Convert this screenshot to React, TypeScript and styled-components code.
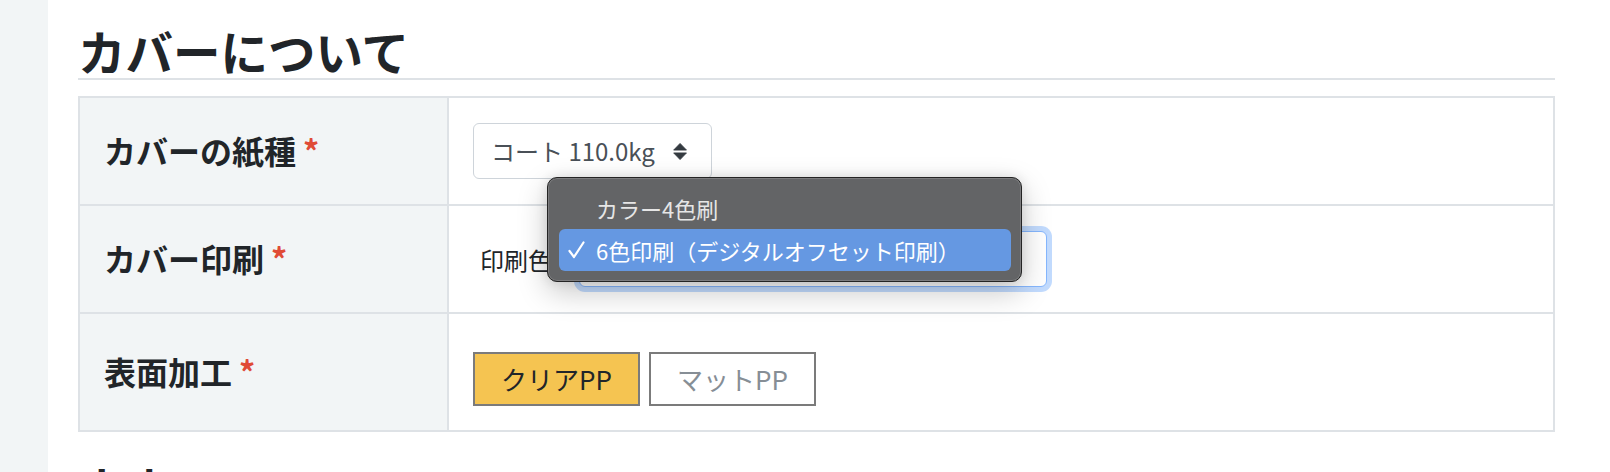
import React from "react";
import styled, { createGlobalStyle } from "styled-components";

const GlobalStyle = createGlobalStyle`
  html, body { margin: 0; padding: 0; background: #ffffff; }
  body {
    font-family: "Noto Sans CJK JP", "Noto Sans", sans-serif;
    color: #212529;
  }
  * { box-sizing: border-box; }
`;

const Page = styled.div`
  display: flex;
  height: 472px;
  overflow: hidden;
`;

const Sidebar = styled.aside`
  width: 48px;
  flex-shrink: 0;
  background: #f2f5f6;
`;

const Main = styled.main`
  flex: 1;
  min-width: 0;
  padding: 23px 55px 0 30px;
`;

const SectionTitle = styled.h2`
  margin: 0;
  font-size: 47.5px;
  line-height: 55px;
  font-weight: 700;
  color: #212529;
  border-bottom: 2px solid #dee2e6;
`;

const NextTitle = styled(SectionTitle)`
  margin-top: 30px;
  border-bottom: none;
`;

const SpecTable = styled.table`
  width: 100%;
  margin-top: 16px;
  border-collapse: collapse;
  table-layout: fixed;
  border: 2px solid #dee2e6;
`;

const LabelCell = styled.th<{ $h: number }>`
  width: 369px;
  height: ${(p) => p.$h}px;
  padding: 0 24px;
  background: #f2f5f6;
  border: 2px solid #dee2e6;
  text-align: left;
  vertical-align: middle;
  font-size: 32px;
  line-height: 1.3;
  font-weight: 700;
  color: #212529;
`;

const Required = styled.span`
  color: #e04b36;
  margin-left: 7px;
`;

const ValueCell = styled.td<{ $offset?: number }>`
  border: 2px solid #dee2e6;
  padding: ${(p) => p.$offset ?? 0}px 24px 0 24px;
  vertical-align: middle;
  background: #ffffff;
`;

const SelectBox = styled.div<{ $width: number; $focused?: boolean }>`
  display: inline-flex;
  align-items: center;
  justify-content: space-between;
  gap: 18px;
  width: ${(p) => p.$width}px;
  height: 56px;
  padding: 0 24px 0 17px;
  border: 1.5px solid ${(p) => (p.$focused ? "#86b7fe" : "#ced4da")};
  border-radius: 6px;
  background: #ffffff;
  font-size: 24px;
  color: #495057;
  box-shadow: ${(p) => (p.$focused ? "0 0 0 5px rgba(13, 110, 253, 0.25)" : "none")};
  white-space: nowrap;
`;

const SelectValue = styled.span`
  line-height: 1;
`;

const ArrowIcon = () => (
  <svg width="17" height="21" viewBox="0 0 17 21" aria-hidden="true">
    <path d="M8.5 0.8 L16.2 8.8 L0.8 8.8 Z" fill="#343a40" stroke="#343a40" strokeWidth="1" strokeLinejoin="round" />
    <path d="M0.8 12.2 L16.2 12.2 L8.5 20.2 Z" fill="#343a40" stroke="#343a40" strokeWidth="1" strokeLinejoin="round" />
  </svg>
);

const FieldRow = styled.div`
  display: flex;
  align-items: center;
`;

const InlineLabel = styled.span`
  font-size: 24px;
  color: #212529;
  margin-left: 7px;
  margin-right: 27px;
  white-space: nowrap;
`;

const SelectWrap = styled.div`
  position: relative;
  display: inline-flex;
`;

const Popup = styled.ul`
  position: absolute;
  left: -32px;
  top: -54px;
  width: 475px;
  margin: 0;
  padding: 9px 10px 10px 11px;
  list-style: none;
  background: #636466;
  border: 1px solid #242424;
  border-radius: 10px;
  box-shadow: inset 0 0 0 1px rgba(255, 255, 255, 0.16), 0 10px 30px rgba(0, 0, 0, 0.22),
    0 0 12px rgba(0, 0, 0, 0.1);
  z-index: 10;
`;

const PopupItem = styled.li<{ $selected?: boolean }>`
  display: flex;
  align-items: center;
  height: 42px;
  padding-left: 9px;
  border-radius: 6px;
  font-size: 22px;
  white-space: nowrap;
  color: ${(p) => (p.$selected ? "#ffffff" : "#e6e6e6")};
  background: ${(p) => (p.$selected ? "#6598e2" : "transparent")};
`;

const CheckSlot = styled.span`
  display: inline-flex;
  width: 28px;
  flex-shrink: 0;
`;

const CheckIcon = () => (
  <svg width="17" height="18" viewBox="0 0 17 18" aria-hidden="true">
    <path d="M1.5 10 L6 16 L15.5 1.5" fill="none" stroke="#ffffff" strokeWidth="2.2" strokeLinecap="round" strokeLinejoin="round" />
  </svg>
);

const ButtonGroup = styled.div`
  display: flex;
  gap: 9px;
`;

const ToggleButton = styled.button<{ $active?: boolean }>`
  height: 54px;
  padding: 0 26px;
  border: 2px solid #7b7b7b;
  border-radius: 0;
  background: ${(p) => (p.$active ? "#f5c451" : "#ffffff")};
  color: ${(p) => (p.$active ? "#212529" : "#868e96")};
  font-family: inherit;
  font-size: 26px;
  line-height: 1;
  cursor: pointer;
`;

export default function App() {
  return (
    <>
      <GlobalStyle />
      <Page>
        <Sidebar />
        <Main>
          <SectionTitle>カバーについて</SectionTitle>
          <SpecTable>
            <tbody>
              <tr>
                <LabelCell $h={108}>
                  カバーの紙種<Required>*</Required>
                </LabelCell>
                <ValueCell>
                  <SelectBox $width={239}>
                    <SelectValue>コート 110.0kg</SelectValue>
                    <ArrowIcon />
                  </SelectBox>
                </ValueCell>
              </tr>
              <tr>
                <LabelCell $h={108}>
                  カバー印刷<Required>*</Required>
                </LabelCell>
                <ValueCell>
                  <FieldRow>
                    <InlineLabel>印刷色</InlineLabel>
                    <SelectWrap>
                      <SelectBox $width={468} $focused>
                        <SelectValue>6色印刷（デジタルオフセット印刷）</SelectValue>
                        <ArrowIcon />
                      </SelectBox>
                      <Popup role="listbox">
                        <PopupItem>
                          <CheckSlot />
                          カラー4色刷
                        </PopupItem>
                        <PopupItem $selected>
                          <CheckSlot>
                            <CheckIcon />
                          </CheckSlot>
                          6色印刷（デジタルオフセット印刷）
                        </PopupItem>
                      </Popup>
                    </SelectWrap>
                  </FieldRow>
                </ValueCell>
              </tr>
              <tr>
                <LabelCell $h={118}>
                  表面加工<Required>*</Required>
                </LabelCell>
                <ValueCell $offset={14}>
                  <ButtonGroup>
                    <ToggleButton $active>クリアPP</ToggleButton>
                    <ToggleButton>マットPP</ToggleButton>
                  </ButtonGroup>
                </ValueCell>
              </tr>
            </tbody>
          </SpecTable>
          <NextTitle>本文について</NextTitle>
        </Main>
      </Page>
    </>
  );
}
